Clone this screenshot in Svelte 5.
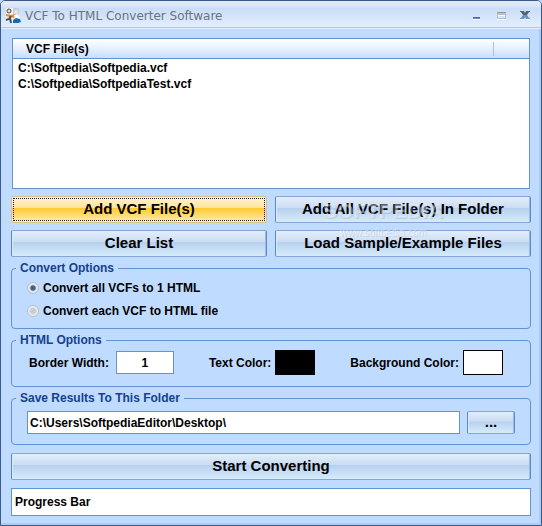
<script lang="ts">
	let files: string[] = ["C:\\Softpedia\\Softpedia.vcf", "C:\\Softpedia\\SoftpediaTest.vcf"];
	let mode = "all";
	let borderWidth = "1";
	let textColor = "#000000";
	let backgroundColor = "#ffffff";
	let folder = "C:\\Users\\SoftpediaEditor\\Desktop\\";

	const clearList = () => (files = []);
</script>

<div class="window">
	<header>
		<svg class="logo" width="16" height="16" viewBox="0 0 16 16" aria-hidden="true">
			<rect x="1" y="0" width="13" height="14" fill="#eef1f5" />
			<path d="M8 0h6v9H8z" fill="#b9d2ea" />
			<circle cx="4" cy="3" r="2" fill="#e8dcd2" stroke="#59483f" />
			<circle cx="11" cy="4" r="2" fill="#f9e2c8" />
			<path d="M1 6l5 1 5-1 2 2-4 2-4-1-4-1z" fill="#f08a24" />
			<path d="M6 8l-2 3-3 1M5 10l1 5" fill="none" stroke="#4a4f58" stroke-width="2" />
			<path d="M9 7l4-1 2 5h-5z" fill="#fff" />
			<path d="M8 12l3-2 4 1 1 3-3 1H8z" fill="#1768b5" />
		</svg>
		<h1>VCF To HTML Converter Software</h1>
		<div class="controls">
			<button aria-label="Minimize">
				<svg width="16" height="12" viewBox="0 0 16 12">
					<path d="M3 9h7v1H3z" fill="#fff" />
					<path d="M3 7h7v1H3z" fill="#5c6570" />
					<path d="M3 8h7v1H3z" fill="#6d8fb8" />
				</svg>
			</button>
			<button aria-label="Maximize">
				<svg width="16" height="12" viewBox="0 0 16 12">
					<path d="M3 9h9v1H3z" fill="#fff" />
					<path d="M3 2h9v7H3zM4 5v3h7V5z" fill="#b9bfcb" fill-rule="evenodd" />
					<path d="M3 2h9v1H3z" fill="#98989f" />
					<path d="M4 5h7v1H4z" fill="#fff" />
				</svg>
			</button>
			<button aria-label="Close">
				<svg width="16" height="12" viewBox="0 0 16 12">
					<path d="M2 9h4v1H2zM8 9h4v1H8z" fill="#fff" />
					<path d="M2 1h4l1 2 1-2h4v1h-1L9 5H5L3 2H2z" fill="#59616d" />
					<path d="M5 5h4l2 3h1v1H8L7 7 6 9H2V8h1z" fill="#6d8fb8" />
				</svg>
			</button>
		</div>
	</header>

	<main>
		<div class="list">
			<table>
				<thead>
					<tr><th scope="col"><span>VCF File(s)</span></th></tr>
				</thead>
				<tbody>
					{#each files as file}
						<tr><td>{file}</td></tr>
					{/each}
				</tbody>
			</table>
		</div>

		<div class="actions">
			<button class="btn active">Add VCF File(s)</button>
			<button class="btn">Add All VCF File(s) In Folder</button>
			<button class="btn" on:click={clearList}>Clear List</button>
			<button class="btn">Load Sample/Example Files</button>
			<div class="watermark">
				<span class="brand">SOFTPEDIA</span>
				<span class="site">www.softpedia.com</span>
			</div>
		</div>

		<fieldset class="convert">
			<legend>Convert Options</legend>
			<label><input type="radio" value="all" bind:group={mode} />Convert all VCFs to 1 HTML</label>
			<label><input type="radio" value="each" bind:group={mode} />Convert each VCF to HTML file</label>
		</fieldset>

		<fieldset>
			<legend>HTML Options</legend>
			<div class="options">
				<label>Border Width: <input class="text number" bind:value={borderWidth} /></label>
				<label class="color">Text Color: <input type="color" bind:value={textColor} /></label>
				<label class="color">Background Color: <input type="color" bind:value={backgroundColor} /></label>
			</div>
		</fieldset>

		<fieldset class="save">
			<legend>Save Results To This Folder</legend>
			<div class="folder">
				<input class="text" aria-label="Save Results To This Folder" bind:value={folder} />
				<button class="btn">...</button>
			</div>
		</fieldset>

		<button class="btn start">Start Converting</button>
		<div class="progress">Progress Bar</div>
	</main>
</div>

<style>
	:global(body) {
		margin: 0;
		background: #bfdbff;
	}

	.window {
		box-sizing: border-box;
		min-height: 100vh;
		border: 1px solid #3b5a89;
		border-radius: 5px 5px 0 0;
		background: #bfdbff;
		box-shadow: inset -2px -2px 0 #adcbf3;
		font: bold 12px/16px "Liberation Sans", Arial, sans-serif;
		color: #000;
	}

	header {
		display: flex;
		align-items: center;
		box-sizing: border-box;
		height: 28px;
		padding: 2px 7px 0 4px;
		border-bottom: 1px solid #e3efff;
		border-radius: 4px 4px 0 0;
		background: linear-gradient(#e3ebf7 0, #d8e5f8 6px, #c9ddf7 7px, #e2eefc 26px, #a5cbf3 26px);
	}

	.logo {
		margin-right: 4px;
	}

	h1 {
		flex: 1;
		margin: 0;
		font: 12px/16px "DejaVu Sans", Verdana, sans-serif;
		color: #6b7280;
	}

	.controls {
		display: flex;
		gap: 8px;
	}

	.controls button {
		display: flex;
		padding: 0;
		border: 0;
		background: none;
	}

	main {
		display: flex;
		flex-direction: column;
		padding: 9px 10px;
	}

	.list {
		height: 149px;
		margin: 0 1px 7px 1px;
		border: 1px solid #6593cf;
		background: #fff;
		overflow: auto;
	}

	table {
		width: 100%;
		border-collapse: collapse;
	}

	th {
		height: 19px;
		padding: 0;
		border-bottom: 1px solid #5f93d8;
		background: linear-gradient(#fff, #e6f0ff 50%, #c6deff);
		text-align: left;
	}

	th span {
		display: block;
		margin-right: 35px;
		padding: 0 13px;
		border-right: 1px solid #9cc3f3;
		line-height: 14px;
	}

	tbody tr:first-child td {
		padding-top: 1px;
	}

	td {
		padding: 0 5px;
	}

	.actions {
		position: relative;
		display: grid;
		grid-template-columns: 1fr 1fr;
		gap: 7px 8px;
	}

	.btn {
		height: 27px;
		padding: 0 0 2px 0;
		border: 1px solid #5f88c2;
		border-top-color: #86a7d6;
		border-bottom-color: #86a7d6;
		border-radius: 2px;
		background: linear-gradient(#e3eefa, #cadcf3 45%, #b7d0ef 46%, #d6ecfb);
		box-shadow: inset 1px 0 0 #d9e9fb, inset -1px 0 0 #9dbce4;
		font: bold 15px/18px "Liberation Sans", Arial, sans-serif;
		color: #000;
	}

	.btn.active {
		border-color: #d9c38c;
		background: linear-gradient(#fff5d5, #ffe297 45%, #ffcb33 46%, #ffe38e 85%, #fff0b8);
		box-shadow: none;
		outline: 1px dotted #1c1c40;
		outline-offset: -3px;
	}

	.watermark {
		position: absolute;
		top: 4px;
		left: 60%;
		display: flex;
		flex-direction: column;
		align-items: center;
		color: rgba(255, 255, 255, 0.4);
		text-shadow: 1px 1px 0 rgba(90, 120, 160, 0.2);
		pointer-events: none;
	}

	.brand {
		font: bold 21px/22px "Liberation Sans", Arial, sans-serif;
	}

	.site {
		font: 10px/22px "Liberation Sans", Arial, sans-serif;
	}

	fieldset {
		min-width: 0;
		margin: 4px 0 0 0;
		padding: 3px 15px 11px 15px;
		border: 1px solid #6593cf;
		border-radius: 4px;
	}

	legend {
		margin-left: -11px;
		padding: 0 4px;
		line-height: 14px;
		color: #15428b;
	}

	.convert {
		display: flex;
		flex-direction: column;
		gap: 7px;
		padding: 5px 15px 9px 15px;
	}

	.convert label {
		display: flex;
		align-items: center;
		gap: 4px;
	}

	input[type="radio"] {
		width: 12px;
		height: 12px;
		margin: 0;
		appearance: none;
		border: 1px solid #b4bfcc;
		border-radius: 50%;
		background: radial-gradient(#c9ccd0 30%, #f2f2f2 70%);
		box-shadow: inset 0 0 0 1px #eef2f6;
	}

	input[type="radio"]:checked {
		background: radial-gradient(#3f6289 30%, #d9dde2 45%);
	}

	.options {
		display: flex;
		align-items: center;
		padding-left: 2px;
	}

	.options label {
		display: flex;
		align-items: center;
		gap: 7px;
	}

	.options .color {
		gap: 4px;
		margin-left: 35px;
	}

	.text {
		box-sizing: border-box;
		height: 23px;
		padding: 0 2px;
		border: 1px solid #6593cf;
		background: #fff;
		font: inherit;
		color: inherit;
	}

	.number {
		width: 58px;
		text-align: center;
	}

	input[type="color"] {
		box-sizing: border-box;
		width: 40px;
		height: 25px;
		padding: 0;
		appearance: none;
		border: 1px solid #000;
		background: none;
	}

	input[type="color"]::-webkit-color-swatch-wrapper {
		padding: 0;
	}

	input[type="color"]::-webkit-color-swatch {
		border: 0;
		border-radius: 0;
	}

	.save {
		padding: 6px 15px 10px 15px;
	}

	.folder {
		display: flex;
		gap: 7px;
	}

	.folder .text {
		flex: 1;
		min-width: 0;
	}

	.folder .btn {
		width: 48px;
		height: 23px;
	}

	.start {
		margin: 8px 0;
	}

	.progress {
		padding: 5px 3px;
		border: 1px solid #6593cf;
		background: #fff;
	}
</style>
